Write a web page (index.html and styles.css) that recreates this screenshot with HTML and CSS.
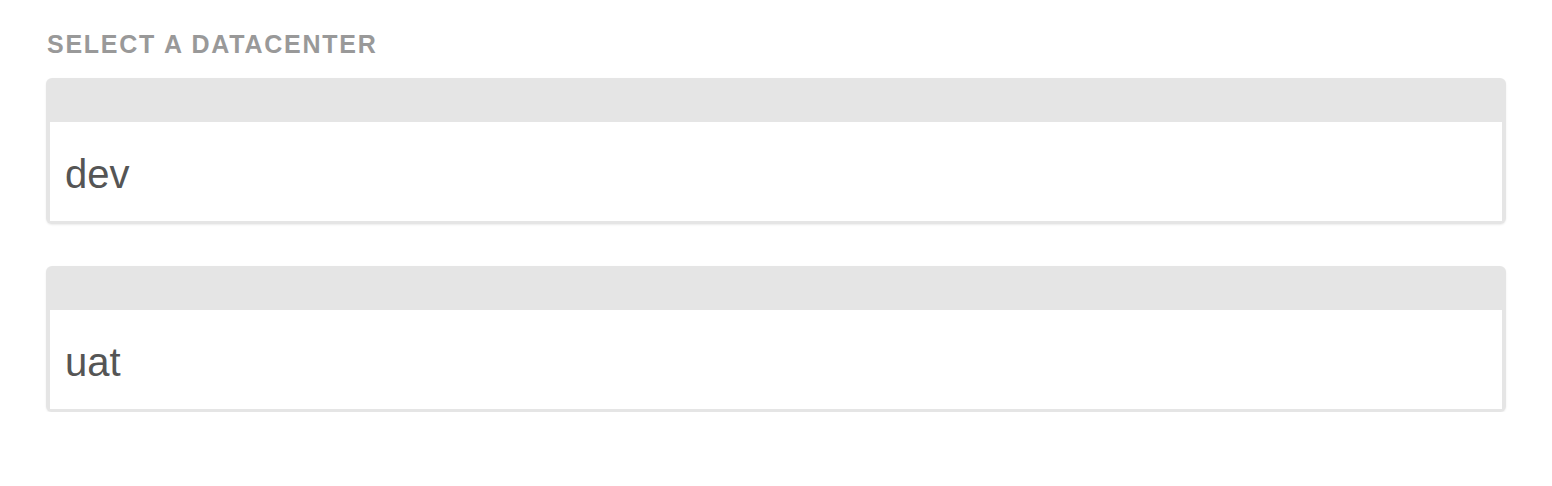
FILE: index.html
```html
<!DOCTYPE html>
<html>
<head>
<meta charset="utf-8">
<link rel="stylesheet" href="styles.css">
</head>
<body>
<div class="page">
  <h2 class="title">SELECT A DATACENTER</h2>
  <div class="list">
    <div class="card"><div class="card-body">dev</div></div>
    <div class="card"><div class="card-body">uat</div></div>
  </div>
</div>
</body>
</html>
```
FILE: styles.css
```css
html, body {
  margin: 0;
  padding: 0;
  background: #ffffff;
}
.page {
  padding: 30px 46px 0 46px;
  font-family: "Liberation Sans", Arial, sans-serif;
}
.title {
  margin: 0 0 20px 1px;
  font-size: 25px;
  line-height: 28px;
  font-weight: bold;
  color: #999999;
  letter-spacing: 1.75px;
}
.list {
  display: flex;
  flex-direction: column;
  gap: 42px;
}
.card {
  background: #e5e5e5;
  border-radius: 6px;
  padding: 44px 4px 3px 4px;
  box-shadow: 0 1px 2px rgba(0,0,0,0.08);
}
.card-body {
  background: #ffffff;
  padding: 29px 14px 24px 15px;
  font-size: 40px;
  line-height: 46px;
  color: #555555;
}
```
